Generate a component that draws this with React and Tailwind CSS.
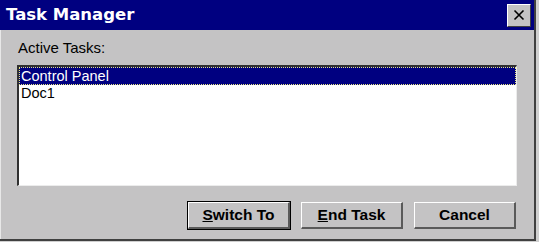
import React from 'react';

const ui = { fontFamily: '"Liberation Sans", Arial, sans-serif' };

function Btn({ children, isDefault }) {
  return (
    <button
      type="button"
      className={`w-[104px] h-[29px] bg-[#c4c3c4] ${isDefault ? 'border border-black' : 'border border-[#c4c3c4]'}`}
    >
      <div className="w-full h-full border-t border-l border-white border-b-2 border-r-2 border-b-[#5a5a5a] border-r-[#5a5a5a] flex items-center justify-center text-[15.5px] font-bold text-black">
        {children}
      </div>
    </button>
  );
}

export default function App() {
  return (
    <div className="w-[539px] h-[242px] bg-[#cfcfcf] overflow-hidden" style={ui}>
      <div className="w-[536px] h-[241px] bg-[#c4c3c4] border-r-2 border-b-2 border-[#404040] flex flex-col">
        {/* Title bar */}
        <div className="h-[30px] bg-[#000080] flex items-center justify-between pl-[6px] pr-[3px]">
          <span className="text-white font-bold text-[16.5px]" style={{ fontFamily: '"DejaVu Sans", sans-serif' }}>
            Task Manager
          </span>
          <button className="w-[24px] h-[23px] bg-[#c4c3c4] border-t border-l border-white border-b border-r border-b-[#404040] border-r-[#404040] flex items-center justify-center">
            <svg width="12" height="12" viewBox="0 0 12 12">
              <path d="M1.5 1.5 L10.5 10.5 M10.5 1.5 L1.5 10.5" stroke="#000" strokeWidth="1.6" />
            </svg>
          </button>
        </div>

        <div className="flex-1 border-l border-[#e8e8e8] pl-[16px] pr-[17px] pt-[8px]">
          <div className="text-[15px] text-black leading-[19px] pl-[1px]">Active Tasks:</div>
          <div className="mt-[8px] h-[121px] bg-white border-t-2 border-l-2 border-t-[#303030] border-l-[#303030] border-b border-r border-b-[#ececec] border-r-[#ececec]">
            <div className="h-[18px] bg-[#000080] border border-dotted border-[#e8e880] text-white text-[14.5px] leading-[16px] pl-[1px]">
              Control Panel
            </div>
            <div className="h-[17px] text-black text-[14.5px] leading-[17px] pl-[2px]">Doc1</div>
          </div>
          <div className="mt-[15px] flex justify-end gap-[9px]">
            <Btn isDefault>
              <span><span className="underline">S</span>witch To</span>
            </Btn>
            <Btn>
              <span><span className="underline">E</span>nd Task</span>
            </Btn>
            <Btn>Cancel</Btn>
          </div>
        </div>
      </div>
    </div>
  );
}
